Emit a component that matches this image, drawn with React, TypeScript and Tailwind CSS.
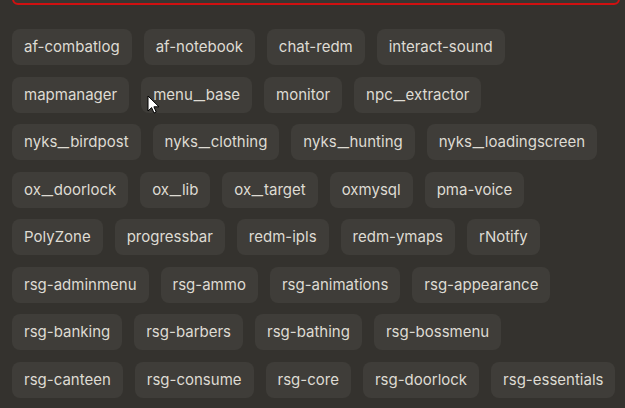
const resources = [
  "af-combatlog",
  "af-notebook",
  "chat-redm",
  "interact-sound",
  "mapmanager",
  "menu_base",
  "monitor",
  "npc_extractor",
  "nyks_birdpost",
  "nyks_clothing",
  "nyks_hunting",
  "nyks_loadingscreen",
  "ox_doorlock",
  "ox_lib",
  "ox_target",
  "oxmysql",
  "pma-voice",
  "PolyZone",
  "progressbar",
  "redm-ipls",
  "redm-ymaps",
  "rNotify",
  "rsg-adminmenu",
  "rsg-ammo",
  "rsg-animations",
  "rsg-appearance",
  "rsg-banking",
  "rsg-barbers",
  "rsg-bathing",
  "rsg-bossmenu",
  "rsg-canteen",
  "rsg-consume",
  "rsg-core",
  "rsg-doorlock",
  "rsg-essentials",
];

// widen the underscore so snake_case names read as one word
function ResourceName({ name }: { name: string }) {
  const parts = name.split("_");
  return (
    <>
      {parts.map((part, i) => (
        <span key={i}>
          {i > 0 && <span className="mx-[3px] inline-block scale-x-[1.7]">_</span>}
          {part}
        </span>
      ))}
    </>
  );
}

function Cursor() {
  return (
    <svg
      className="pointer-events-none absolute left-[147px] top-[95px]"
      width="14"
      height="20"
      viewBox="0 0 14 20"
    >
      <path
        d="M1 1 L1 16 L4.6 12.6 L7 18 L9.2 17 L6.9 11.8 L12 11.8 Z"
        fill="#ffffff"
        stroke="#000000"
        strokeWidth="1"
        strokeLinejoin="round"
      />
    </svg>
  );
}

export default function App() {
  return (
    <div
      className="relative h-[408px] w-[625px] overflow-hidden bg-[#34322e] pl-3 pr-[5px]"
      style={{ fontFamily: "Inter, 'Noto Sans', sans-serif" }}
    >
      {/* search field, scrolled mostly out of view */}
      <div className="-mt-[36px] h-[41px] rounded-md border-2 border-[#d01010] bg-[#383632]" />

      <div className="mt-[24px] mr-[3px] flex flex-wrap gap-x-3 gap-y-[11.5px]">
        {resources.map((name) => (
          <span
            key={name}
            className="whitespace-nowrap rounded-lg bg-[#3f3d39] px-3 py-2 text-[15px] leading-5 text-[#dedbd3]"
          >
            <ResourceName name={name} />
          </span>
        ))}
      </div>

      <Cursor />
    </div>
  );
}
